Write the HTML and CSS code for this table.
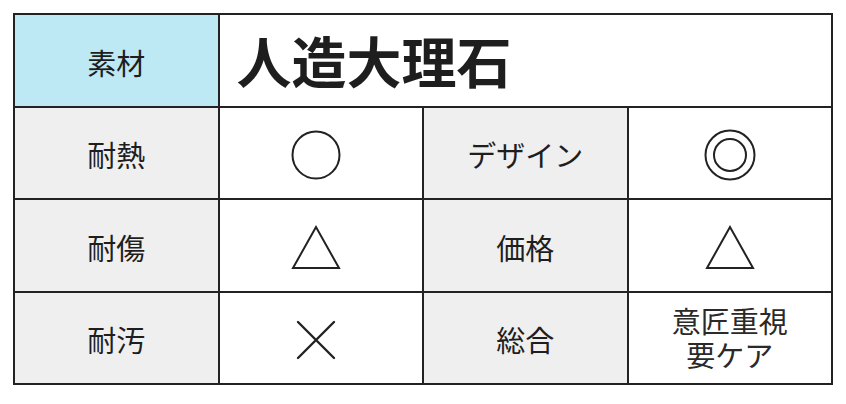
FILE: index.html
```html
<!DOCTYPE html>
<html lang="ja">
<head>
<meta charset="utf-8">
<link rel="stylesheet" href="styles.css">
</head>
<body>
<div class="spec">
  <div class="cell label head">素材</div>
  <div class="cell title">人造大理石</div>

  <div class="cell label">耐熱</div>
  <div class="cell value left">
    <svg width="52" height="52" viewBox="0 0 52 52"><circle cx="26" cy="26" r="23.5" fill="none" stroke="#222" stroke-width="2"/></svg>
  </div>
  <div class="cell label">デザイン</div>
  <div class="cell value">
    <svg width="54" height="54" viewBox="0 0 54 54"><circle cx="27" cy="27" r="24.5" fill="none" stroke="#222" stroke-width="2"/><circle cx="27" cy="27" r="16" fill="none" stroke="#222" stroke-width="2"/></svg>
  </div>

  <div class="cell label">耐傷</div>
  <div class="cell value left">
    <svg width="50" height="46" viewBox="0 0 50 46"><polygon points="25,3 2,44 48,44" fill="none" stroke="#222" stroke-width="2" stroke-linejoin="miter"/></svg>
  </div>
  <div class="cell label">価格</div>
  <div class="cell value">
    <svg width="50" height="46" viewBox="0 0 50 46"><polygon points="25,3 2,44 48,44" fill="none" stroke="#222" stroke-width="2" stroke-linejoin="miter"/></svg>
  </div>

  <div class="cell label">耐汚</div>
  <div class="cell value left">
    <svg width="40" height="40" viewBox="0 0 40 40"><path d="M2 2 L38 38 M38 2 L2 38" stroke="#222" stroke-width="2.4" stroke-linecap="round"/></svg>
  </div>
  <div class="cell label">総合</div>
  <div class="cell value text">
    <span class="line">意匠重視</span>
    <span class="line">要ケア</span>
  </div>
</div>
</body>
</html>
```

FILE: styles.css
```css
html, body {
  margin: 0;
  background: #ffffff;
}
body {
  padding: 13px 0 0 13px;
  font-family: "Noto Sans CJK JP", "Noto Sans", sans-serif;
  color: #1e1e1e;
}
.spec {
  width: 820px;
  height: 372px;
  box-sizing: border-box;
  display: grid;
  grid-template-columns: repeat(4, 1fr);
  grid-template-rows: repeat(4, 1fr);
  gap: 2px;
  padding: 2px;
  background: #222222;
}
.cell {
  background: #ffffff;
  display: flex;
  align-items: center;
  justify-content: center;
  padding-top: 4px;
  box-sizing: border-box;
}
.label {
  background: #efefef;
  font-size: 29px;
  line-height: 1;
}
.label.head {
  background: #bde9f4;
}
.title {
  grid-column: span 3;
  justify-content: flex-start;
  padding-left: 17px;
  padding-top: 0;
  padding-bottom: 3px;
  font-size: 55px;
  font-weight: 700;
  color: #1e1e1e;
}
.value.left {
  padding-right: 10px;
}
.value svg {
  display: block;
}
.text {
  flex-direction: column;
  font-family: "Liberation Sans", "Noto Sans CJK JP", sans-serif;
  font-size: 29px;
  color: #2a2a2a;
  padding-top: 4px;
}
.line {
  display: block;
  line-height: 34px;
  text-align: center;
}
```
